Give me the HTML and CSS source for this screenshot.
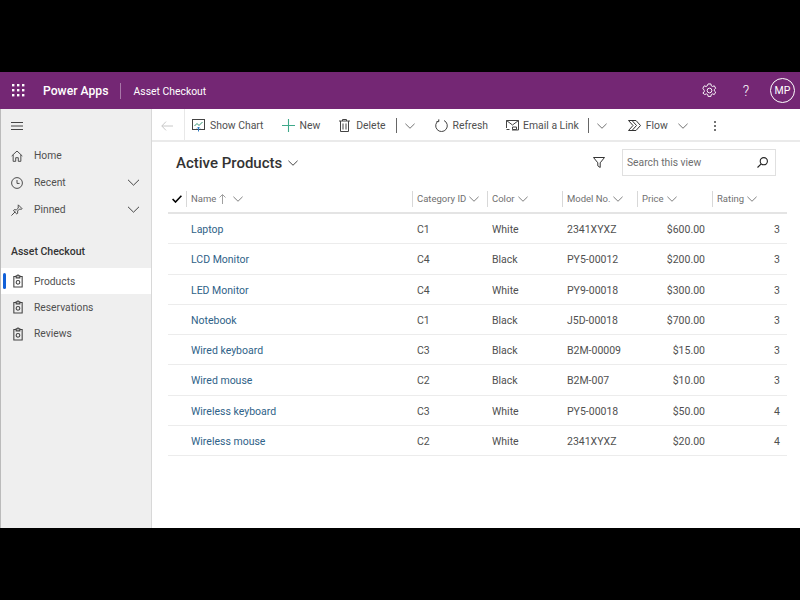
FILE: index.html
```html
<!DOCTYPE html>
<html lang="en">
<head>
<meta charset="utf-8">
<title>Asset Checkout</title>
<link rel="stylesheet" href="styles.css">
</head>
<body>
<svg class="defs" width="0" height="0" aria-hidden="true">
  <defs>
    <symbol id="chev" viewBox="0 0 12 7"><path d="M.5.8 6 6.2 11.5.8" fill="none" stroke="currentColor" stroke-width="1"/></symbol>
    <symbol id="clip" viewBox="0 0 12 16"><g fill="none" stroke="currentColor" stroke-width="1.3"><path d="M3.6 2.6H1v12.6h10V2.6H8.4"/><path d="M3.8 4.2V1.8h1.2a1 1 0 0 1 2 0h1.200v2.400z"/><circle cx="6" cy="9.600" r="2.200"/></g></symbol>
  </defs>
</svg>
<div class="app">
  <header class="top">
    <svg class="waffle" width="13" height="13" viewBox="0 0 13 13" fill="#fff"><rect x="0" y="0" width="2.400" height="2.400"/><rect x="5" y="0" width="2.400" height="2.400"/><rect x="10" y="0" width="2.400" height="2.400"/><rect x="0" y="5" width="2.400" height="2.400"/><rect x="5" y="5" width="2.400" height="2.400"/><rect x="10" y="5" width="2.400" height="2.400"/><rect x="0" y="10" width="2.400" height="2.400"/><rect x="5" y="10" width="2.400" height="2.400"/><rect x="10" y="10" width="2.400" height="2.400"/></svg>
    <span class="brand">Power Apps</span>
    <span class="top-sep"></span>
    <span class="app-name">Asset Checkout</span>
    <span class="top-right">
      <svg class="gear" width="15" height="15" viewBox="0 0 16 16" fill="none" stroke="#fff" stroke-width="1"><circle cx="8" cy="8" r="2.500"/><path d="M6.500 1h3l.4 2 1.300.7 1.900-.7 1.500 2.600-1.500 1.300v1.500l1.500 1.300-1.500 2.600-1.900-.7-1.300.7-.4 2h-3l-.4-2-1.300-.7-1.900.7L.9 10.700l1.500-1.300V7.900L.9 5.600l1.500-2.600 1.900.7 1.300-.7z"/></svg>
      <span class="help">?</span>
      <span class="avatar">MP</span>
    </span>
  </header>
  <div class="body">
    <nav class="side">
      <svg class="burger" width="12" height="8" viewBox="0 0 12 8" stroke="#444" stroke-width="1"><path d="M0 .5h12M0 4h12M0 7.500h12"/></svg>
      <ul class="nav-top">
        <li class="nav-item">
          <svg class="nav-icon" width="12" height="12" viewBox="0 0 14 14" fill="none" stroke="currentColor" stroke-width="1.100"><path d="M.8 7 7 1.200 13.200 7M2.500 5.800v7.400h3V9h3v4.200h3V5.800"/></svg>
          <span class="nav-label">Home</span>
        </li>
        <li class="nav-item">
          <svg class="nav-icon" width="12" height="12" viewBox="0 0 14 14" fill="none" stroke="currentColor" stroke-width="1.100"><circle cx="7" cy="7" r="6.300"/><path d="M7 3.500V7.500H10"/></svg>
          <span class="nav-label">Recent</span>
          <svg class="nav-chev" width="12" height="7"><use href="#chev"/></svg>
        </li>
        <li class="nav-item">
          <svg class="nav-icon" width="12" height="12" viewBox="0 0 14 14" fill="none" stroke="currentColor" stroke-width="1.100"><path d="M.5 13.500 5 9M8.500 1 13 5.500l-1 .6-2.300-.1-2 2.200.1 2.600-1 .9L2.800 7.700l.9-1 2.600.1 2.200-2-.1-2.300z"/></svg>
          <span class="nav-label">Pinned</span>
          <svg class="nav-chev" width="12" height="7"><use href="#chev"/></svg>
        </li>
      </ul>
      <div class="nav-title">Asset Checkout</div>
      <ul class="nav-sub">
        <li class="sub-item active"><svg class="nav-icon" width="10" height="14"><use href="#clip"/></svg><span class="nav-label">Products</span></li>
        <li class="sub-item"><svg class="nav-icon" width="10" height="14"><use href="#clip"/></svg><span class="nav-label">Reservations</span></li>
        <li class="sub-item"><svg class="nav-icon" width="10" height="14"><use href="#clip"/></svg><span class="nav-label">Reviews</span></li>
      </ul>
    </nav>
    <main class="main">
      <div class="cmd">
        <span class="back"><svg width="12" height="10" viewBox="0 0 12 10" fill="none" stroke="#c8c8c8"><path d="M12 5H.8M5 .6.8 5 5 9.400"/></svg></span>
        <span class="cmd-btn first">
          <svg width="13" height="13" viewBox="0 0 13 13" fill="none" stroke="#444"><rect x=".5" y=".5" width="12" height="10"/><path d="M2.500 7 5 4.500 7 6.500 10.500 3" stroke="#2f8f6f"/><path d="M6.500 12.500V8M5 9.500 6.500 8 8 9.500" stroke="#2b79c2"/></svg>
          Show Chart
        </span>
        <span class="cmd-btn new">
          <svg width="13" height="13" viewBox="0 0 13 13" stroke="#3fa98a" stroke-width="1.100"><path d="M6.500 0v13M0 6.500h13"/></svg>
          New
        </span>
        <span class="cmd-btn del">
          <svg width="11" height="13" viewBox="0 0 11 13" fill="none" stroke="#444"><path d="M0 2h11M3.500 2V.5h4V2M1.500 2v10.500h8V2M4 4.500v6M7 4.500v6"/></svg>
          Delete
        </span>
        <span class="cmd-sep"></span>
        <svg class="cmd-chev chev-a" width="10" height="6"><use href="#chev"/></svg>
        <span class="cmd-btn refresh">
          <svg width="13" height="13" viewBox="0 0 13 13" fill="none" stroke="#444"><path d="M3.800 1.600A5.800 5.800 0 1 0 9 1.500M3.800 .3V2.600H1.500"/></svg>
          Refresh
        </span>
        <span class="cmd-btn mail">
          <svg width="13" height="11" viewBox="0 0 13 11" fill="none" stroke="#444"><path d="M.5 8V.5h12V10H6M.5.5 6.500 5 12.500.5M.5 9.500h3"/><path d="M6.500 7h4v2.500h-4z"/></svg>
          Email a Link
        </span>
        <span class="cmd-sep sep-b"></span>
        <svg class="cmd-chev chev-b" width="10" height="6"><use href="#chev"/></svg>
        <span class="cmd-btn flow">
          <svg width="13" height="11" viewBox="0 0 13 11" fill="none" stroke="#333"><path d="M.5.5H8l4.500 5L8 10.500H.5l4.500-5zM4 .5l4.500 5-4.500 5"/></svg>
          Flow
        </span>
        <svg class="cmd-chev chev-c" width="10" height="6"><use href="#chev"/></svg>
        <svg class="more" width="2" height="10" viewBox="0 0 2 10" fill="#444"><circle cx="1" cy="1" r="1"/><circle cx="1" cy="5" r="1"/><circle cx="1" cy="9" r="1"/></svg>
      </div>
      <div class="view">
        <h1 class="view-title">Active Products</h1>
        <svg class="view-chev" width="10" height="6"><use href="#chev"/></svg>
        <svg class="filter" width="12" height="11" viewBox="0 0 12 11" fill="none" stroke="#333"><path d="M.5.5h11L7.200 5.800V10.500L4.800 8.800V5.800z"/></svg>
        <div class="search">
          <span class="search-text">Search this view</span>
          <svg width="11" height="11" viewBox="0 0 11 11" fill="none" stroke="#222" stroke-width="1.100"><circle cx="6.800" cy="4.200" r="3.600"/><path d="M4.200 6.800.5 10.500"/></svg>
        </div>
      </div>
      <div class="grid">
        <div class="row head">
          <div class="check"><svg width="10" height="8" viewBox="0 0 10 8" fill="none" stroke="#000" stroke-width="1.600"><path d="M.6 4 3.500 7 9.400.8"/></svg></div>
          <div class="th name">Name
            <svg class="sort" width="7" height="10" viewBox="0 0 7 10" fill="none" stroke="#a0a0a0"><path d="M3.500 10V.8M.5 3.500l3-3 3 3"/></svg>
            <svg class="th-chev wide" width="10" height="6"><use href="#chev"/></svg>
          </div>
          <div class="th">Category ID<svg class="th-chev" width="10" height="6"><use href="#chev"/></svg></div>
          <div class="th">Color<svg class="th-chev" width="10" height="6"><use href="#chev"/></svg></div>
          <div class="th">Model No.<svg class="th-chev" width="10" height="6"><use href="#chev"/></svg></div>
          <div class="th">Price<svg class="th-chev" width="10" height="6"><use href="#chev"/></svg></div>
          <div class="th">Rating<svg class="th-chev" width="10" height="6"><use href="#chev"/></svg></div>
        </div>
        <div class="row item"><div></div><a class="td link">Laptop</a><div class="td">C1</div><div class="td">White</div><div class="td">2341XYXZ</div><div class="td price">$600.00</div><div class="td rating">3</div></div>
        <div class="row item"><div></div><a class="td link">LCD Monitor</a><div class="td">C4</div><div class="td">Black</div><div class="td">PY5-00012</div><div class="td price">$200.00</div><div class="td rating">3</div></div>
        <div class="row item"><div></div><a class="td link">LED Monitor</a><div class="td">C4</div><div class="td">White</div><div class="td">PY9-00018</div><div class="td price">$300.00</div><div class="td rating">3</div></div>
        <div class="row item"><div></div><a class="td link">Notebook</a><div class="td">C1</div><div class="td">Black</div><div class="td">J5D-00018</div><div class="td price">$700.00</div><div class="td rating">3</div></div>
        <div class="row item"><div></div><a class="td link">Wired keyboard</a><div class="td">C3</div><div class="td">Black</div><div class="td">B2M-00009</div><div class="td price">$15.00</div><div class="td rating">3</div></div>
        <div class="row item"><div></div><a class="td link">Wired mouse</a><div class="td">C2</div><div class="td">Black</div><div class="td">B2M-007</div><div class="td price">$10.00</div><div class="td rating">3</div></div>
        <div class="row item"><div></div><a class="td link">Wireless keyboard</a><div class="td">C3</div><div class="td">White</div><div class="td">PY5-00018</div><div class="td price">$50.00</div><div class="td rating">4</div></div>
        <div class="row item"><div></div><a class="td link">Wireless mouse</a><div class="td">C2</div><div class="td">White</div><div class="td">2341XYXZ</div><div class="td price">$20.00</div><div class="td rating">4</div></div>
      </div>
    </main>
  </div>
</div>
</body>
</html>
```
FILE: styles.css
```css
* { box-sizing: border-box; }
html, body { margin: 0; height: 100%; background: #000; }
body { padding-top: 72px; font-family: Roboto, "Noto Sans", sans-serif; color: #444; }
.defs { display: block; height: 0; }
svg { display: block; flex: none; }
ul { list-style: none; margin: 0; padding: 0; }
.app { width: 800px; height: 456px; display: flex; flex-direction: column; background: #fff; overflow: hidden; }

.top { height: 37px; flex: none; background: #742774; color: #fff; display: flex; align-items: center; padding-left: 12px; }
.brand { font-size: 12.200px; font-weight: 500; margin-left: 18px; }
.top-sep { width: 1px; height: 16px; background: #a877a8; margin: 0 12px 0 12px; }
.app-name { font-size: 10.400px; padding-top: 1px; }
.top-right { margin-left: auto; display: flex; align-items: center; padding-right: 5px; }
.help { font-size: 14px; width: 10px; text-align: center; margin: 0 19px 0 24px; font-weight: 300; }
.avatar { width: 25px; height: 25px; border: 1px solid #fff; border-radius: 50%; font-size: 10.500px; display: flex; align-items: center; justify-content: center; }

.body { flex: 1; display: flex; min-height: 0; }
.side { width: 152px; flex: none; background: #efefef; border-right: 1px solid #d8d8d8; border-left: 1px solid #bbb; }
.burger { margin: 13px 0 0 10px; }
.nav-top { margin-top: 12px; }
.nav-item { height: 27px; display: flex; align-items: center; padding-left: 10px; position: relative; }
.nav-icon { color: #444; }
.nav-label { font-size: 10.300px; color: #505050; position: absolute; left: 33px; }
.nav-chev { color: #444; margin-left: auto; margin-right: 11px; width: 13px; height: 7px; }
.nav-title { font-size: 10.500px; font-weight: 500; color: #333; margin: 22px 0 0 10px; height: 23px; }
.sub-item { height: 26.250px; display: flex; align-items: center; padding-left: 12px; position: relative; }
.sub-item.active { background: #fff; }
.sub-item.active::before { content: ""; position: absolute; left: 2px; top: 5px; width: 3px; height: 16px; background: #1160d8; border-radius: 2px; }

.main { flex: 1; min-width: 0; }
.cmd { height: 33px; border-bottom: 2px solid #eaeaea; display: flex; align-items: center; font-size: 10.400px; color: #505050; }
.back { width: 33px; height: 100%; border-right: 1px solid #e8e8e8; display: flex; align-items: center; padding: 2px 0 0 9px; flex: none; }
.cmd-btn { display: flex; align-items: center; gap: 5px; white-space: nowrap; padding-top: 2px; }
.cmd-btn.first { margin-left: 7px; }
.cmd-btn.new { margin-left: 18px; gap: 5px; }
.cmd-btn.del { margin-left: 19px; gap: 6px; }
.cmd-btn.refresh { margin-left: 20px; gap: 5px; }
.cmd-btn.mail { margin-left: 18px; gap: 4px; }
.cmd-btn.flow { margin-left: 21px; gap: 5px; }
.cmd-sep { width: 1px; height: 15px; background: #666; margin: 2px 0 0 10px; }
.cmd-sep.sep-b { margin-left: 9px; }
.cmd-chev { color: #555; margin-top: 2px; }
.chev-a, .chev-b { margin-left: 8px; }
.chev-c { margin-left: 10px; }
.more { margin: 2px 0 0 26px; }

.view { height: 34px; padding: 7px 24px 0 24px; display: flex; align-items: center; }
.view-title { margin: 0; font-size: 15px; font-weight: 500; color: #333; }
.view-chev { margin-left: 6px; color: #222; }
.filter { margin-left: auto; margin-right: 17px; }
.search { width: 154px; height: 27px; border: 1px solid #e0e0e0; display: flex; align-items: center; justify-content: space-between; padding: 0 7px 0 4px; }
.search-text { font-size: 10.300px; color: #6e6e6e; }

.grid { padding: 9px 13px 0 16px; }
.row { display: grid; grid-template-columns: 18px 226px 75px 75px 75px 75px 75px; align-items: center; }
.head { height: 29px; border-bottom: 2px solid #e4e4e4; }
.check { display: flex; justify-content: flex-start; padding-left: 4px; }
.th { height: 16px; border-left: 1px solid #d8d8d8; padding-left: 4px; display: flex; align-items: center; gap: 3px; font-size: 9.500px; color: #707070; }
.th-chev { color: #666; }
.th.name { gap: 3px; }
.th.name .wide { margin-left: 4px; }
.item { height: 30.250px; border-bottom: 1px solid #ececec; font-size: 10.500px; color: #505050; }
.td { padding: 2px 0 0 5px; white-space: nowrap; }
.link { color: #2f6288; }
.price { text-align: right; padding-right: 7px; }
.rating { text-align: right; padding-right: 7px; }
```
